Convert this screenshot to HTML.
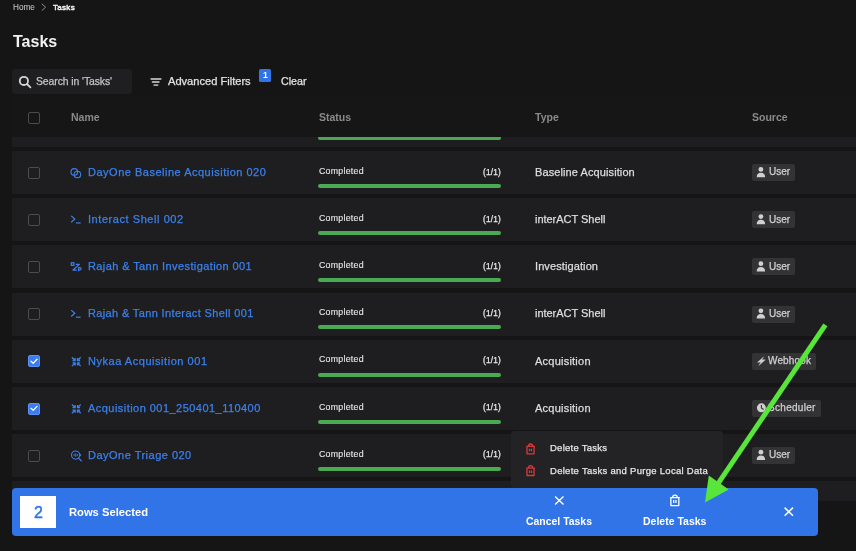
<!DOCTYPE html>
<html><head><meta charset="utf-8"><style>
html,body{margin:0;padding:0;}
body{width:856px;height:551px;overflow:hidden;background:#151515;position:relative;font-family:"Liberation Sans", sans-serif;}
.t{position:absolute;line-height:1;white-space:nowrap;will-change:transform;}
.m{-webkit-text-stroke:0.25px currentColor;}
.s{-webkit-text-stroke:0.12px currentColor;}
.sb{-webkit-text-stroke:0.45px currentColor;}
.b{position:absolute;box-sizing:border-box;}
svg{position:absolute;overflow:visible;}
</style></head><body>
<div class="t s" style="left:12.80px;top:3.66px;font-size:8.2px;color:#bcbcbc;font-weight:400;letter-spacing:0.02px;">Home</div>
<svg style="left:0;top:0" width="856" height="551"><path d="M41.8 3.8 L45.6 7.2 L41.8 10.6" fill="none" stroke="#9a9a9a" stroke-width="0.9"/></svg>
<div class="t sb" style="left:53.10px;top:3.53px;font-size:8.0px;color:#f2f2f2;font-weight:400;letter-spacing:0.3px;">Tasks</div>
<div class="t " style="left:13.00px;top:34.06px;font-size:16px;color:#f2f2f2;font-weight:700;letter-spacing:0px;">Tasks</div>
<div class="b" style="left:12px;top:69px;width:120px;height:25px;background:#1f1f21;border-radius:3px;"></div>
<svg style="left:0;top:0" width="856" height="551"><circle cx="23.9" cy="80.9" r="4.1" fill="none" stroke="#d6d6d6" stroke-width="1.8"/><path d="M27 84 L30.4 87.4" stroke="#d6d6d6" stroke-width="1.8" stroke-linecap="round"/></svg>
<div class="t m" style="left:35.70px;top:77.10px;font-size:10.4px;color:#c4c4c4;font-weight:400;letter-spacing:-0.08px;">Search in 'Tasks'</div>
<svg style="left:0;top:0" width="856" height="551"><path d="M151.3 79 H160.7 M152.6 82 H158.8 M154.2 85.1 H157.6" stroke="#a8a8a8" stroke-width="1.8" stroke-linecap="round"/></svg>
<div class="t m" style="left:168.40px;top:75.80px;font-size:11.1px;color:#e2e2e2;font-weight:400;letter-spacing:0px;">Advanced Filters</div>
<div class="b" style="left:259px;top:69px;width:12px;height:12.5px;background:#3074e7;border-radius:1.5px;"></div>
<div class="t " style="left:262.60px;top:71.40px;font-size:8.5px;color:#ffffff;font-weight:700;letter-spacing:0px;">1</div>
<div class="t m" style="left:280.90px;top:76.14px;font-size:10.7px;color:#e2e2e2;font-weight:400;letter-spacing:0px;">Clear</div>
<div class="b" style="left:0;top:0;width:856px;height:501px;overflow:hidden;">
<div class="b" style="left:12px;top:104px;width:850px;height:43px;background:#1e1e20;border-radius:1px;"></div>
<div class="b" style="left:318px;top:136px;width:183px;height:4px;background:#4aaa52;border-radius:2px;"></div>
<div class="b" style="left:12px;top:151.2px;width:850px;height:43px;background:#1e1e20;border-radius:1px;"></div>
<div class="b" style="left:28px;top:166.89999999999998px;width:12px;height:12px;background:transparent;border-radius:2px;border:1px solid #4c4c4e;"></div>
<svg style="left:0;top:0" width="856" height="551"><circle cx="74.3" cy="171.89999999999998" r="3.3" fill="none" stroke="#3b80ec" stroke-width="1.1"/><circle cx="77.4" cy="174.5" r="3.3" fill="none" stroke="#3b80ec" stroke-width="1.1"/></svg>
<div class="t m" style="left:88.40px;top:166.99px;font-size:11px;color:#3b80ec;font-weight:400;letter-spacing:0.505px;">DayOne Baseline Acquisition 020</div>
<div class="t s" style="left:318.80px;top:166.95px;font-size:8.8px;color:#e8e8e8;font-weight:400;letter-spacing:0.25px;">Completed</div>
<div class="t m" style="right:355.40px;top:167.67px;font-size:8.3px;color:#e8e8e8;font-weight:400;letter-spacing:0.2px;">(1/1)</div>
<div class="b" style="left:318px;top:184.0px;width:183px;height:4px;background:#4aaa52;border-radius:2px;"></div>
<div class="t m" style="left:535.30px;top:167.09px;font-size:11px;color:#dedede;font-weight:400;letter-spacing:0.1px;">Baseline Acquisition</div>
<div class="b" style="left:752px;top:164.2px;width:43px;height:17px;background:#333335;border-radius:2px;"></div>
<svg style="left:0;top:0" width="856" height="551"><circle cx="760.9" cy="169.39999999999998" r="2.4" fill="#d0d0d0"/><path d="M756.7 177.2 Q756.7 172.7 760.9 172.7 Q765.1 172.7 765.1 177.2 Z" fill="#d0d0d0"/></svg>
<div class="t m" style="left:768.60px;top:167.43px;font-size:10px;color:#d0d0d0;font-weight:400;letter-spacing:0px;">User</div>
<div class="b" style="left:12px;top:198.33px;width:850px;height:43px;background:#1e1e20;border-radius:1px;"></div>
<div class="b" style="left:28px;top:214.03px;width:12px;height:12px;background:transparent;border-radius:2px;border:1px solid #4c4c4e;"></div>
<svg style="left:0;top:0" width="856" height="551"><path d="M71.2 215.83 L74.8 219.03 L71.2 222.23000000000002" fill="none" stroke="#3b80ec" stroke-width="1.2"/><path d="M76 222.93 H80.6" stroke="#3b80ec" stroke-width="1.2"/></svg>
<div class="t m" style="left:88.40px;top:214.12px;font-size:11px;color:#3b80ec;font-weight:400;letter-spacing:0.56px;">Interact Shell 002</div>
<div class="t s" style="left:318.80px;top:214.08px;font-size:8.8px;color:#e8e8e8;font-weight:400;letter-spacing:0.25px;">Completed</div>
<div class="t m" style="right:355.40px;top:214.80px;font-size:8.3px;color:#e8e8e8;font-weight:400;letter-spacing:0.2px;">(1/1)</div>
<div class="b" style="left:318px;top:231.13px;width:183px;height:4px;background:#4aaa52;border-radius:2px;"></div>
<div class="t m" style="left:535.30px;top:214.22px;font-size:11px;color:#dedede;font-weight:400;letter-spacing:-0.03px;">interACT Shell</div>
<div class="b" style="left:752px;top:211.33px;width:43px;height:17px;background:#333335;border-radius:2px;"></div>
<svg style="left:0;top:0" width="856" height="551"><circle cx="760.9" cy="216.53" r="2.4" fill="#d0d0d0"/><path d="M756.7 224.33 Q756.7 219.83 760.9 219.83 Q765.1 219.83 765.1 224.33 Z" fill="#d0d0d0"/></svg>
<div class="t m" style="left:768.60px;top:214.56px;font-size:10px;color:#d0d0d0;font-weight:400;letter-spacing:0px;">User</div>
<div class="b" style="left:12px;top:245.46px;width:850px;height:43px;background:#1e1e20;border-radius:1px;"></div>
<div class="b" style="left:28px;top:261.16px;width:12px;height:12px;background:transparent;border-radius:2px;border:1px solid #4c4c4e;"></div>
<svg style="left:0;top:0" width="856" height="551"><rect x="71.3" y="262.76" width="2.6" height="2.6" fill="none" stroke="#3b80ec" stroke-width="1.2"/><path d="M75.8 264.36 H79.4 L73 270.06 H76.8" fill="none" stroke="#3b80ec" stroke-width="1.2" stroke-linejoin="round"/><path d="M78.6 271.26 V267.66 H80 A1.1 1.1 0 0 1 80 269.86 H78.6" fill="none" stroke="#3b80ec" stroke-width="1.1"/></svg>
<div class="t m" style="left:88.40px;top:261.25px;font-size:11px;color:#3b80ec;font-weight:400;letter-spacing:0.4px;">Rajah &amp; Tann Investigation 001</div>
<div class="t s" style="left:318.80px;top:261.21px;font-size:8.8px;color:#e8e8e8;font-weight:400;letter-spacing:0.25px;">Completed</div>
<div class="t m" style="right:355.40px;top:261.93px;font-size:8.3px;color:#e8e8e8;font-weight:400;letter-spacing:0.2px;">(1/1)</div>
<div class="b" style="left:318px;top:278.26px;width:183px;height:4px;background:#4aaa52;border-radius:2px;"></div>
<div class="t m" style="left:535.30px;top:261.35px;font-size:11px;color:#dedede;font-weight:400;letter-spacing:0.1px;">Investigation</div>
<div class="b" style="left:752px;top:258.46000000000004px;width:43px;height:17px;background:#333335;border-radius:2px;"></div>
<svg style="left:0;top:0" width="856" height="551"><circle cx="760.9" cy="263.66" r="2.4" fill="#d0d0d0"/><path d="M756.7 271.46000000000004 Q756.7 266.96000000000004 760.9 266.96000000000004 Q765.1 266.96000000000004 765.1 271.46000000000004 Z" fill="#d0d0d0"/></svg>
<div class="t m" style="left:768.60px;top:261.70px;font-size:10px;color:#d0d0d0;font-weight:400;letter-spacing:0px;">User</div>
<div class="b" style="left:12px;top:292.59px;width:850px;height:43px;background:#1e1e20;border-radius:1px;"></div>
<div class="b" style="left:28px;top:308.28999999999996px;width:12px;height:12px;background:transparent;border-radius:2px;border:1px solid #4c4c4e;"></div>
<svg style="left:0;top:0" width="856" height="551"><path d="M71.2 310.09 L74.8 313.28999999999996 L71.2 316.48999999999995" fill="none" stroke="#3b80ec" stroke-width="1.2"/><path d="M76 317.19 H80.6" stroke="#3b80ec" stroke-width="1.2"/></svg>
<div class="t m" style="left:88.40px;top:308.38px;font-size:11px;color:#3b80ec;font-weight:400;letter-spacing:0.36px;">Rajah &amp; Tann Interact Shell 001</div>
<div class="t s" style="left:318.80px;top:308.34px;font-size:8.8px;color:#e8e8e8;font-weight:400;letter-spacing:0.25px;">Completed</div>
<div class="t m" style="right:355.40px;top:309.06px;font-size:8.3px;color:#e8e8e8;font-weight:400;letter-spacing:0.2px;">(1/1)</div>
<div class="b" style="left:318px;top:325.39px;width:183px;height:4px;background:#4aaa52;border-radius:2px;"></div>
<div class="t m" style="left:535.30px;top:308.48px;font-size:11px;color:#dedede;font-weight:400;letter-spacing:-0.03px;">interACT Shell</div>
<div class="b" style="left:752px;top:305.59px;width:43px;height:17px;background:#333335;border-radius:2px;"></div>
<svg style="left:0;top:0" width="856" height="551"><circle cx="760.9" cy="310.78999999999996" r="2.4" fill="#d0d0d0"/><path d="M756.7 318.59 Q756.7 314.09 760.9 314.09 Q765.1 314.09 765.1 318.59 Z" fill="#d0d0d0"/></svg>
<div class="t m" style="left:768.60px;top:308.82px;font-size:10px;color:#d0d0d0;font-weight:400;letter-spacing:0px;">User</div>
<div class="b" style="left:12px;top:339.72px;width:850px;height:43px;background:#1e1e20;border-radius:1px;"></div>
<div class="b" style="left:28px;top:355.42px;width:12px;height:12px;background:#3b7cf0;border-radius:2px;border:1px solid #5a93f5;"></div>
<svg style="left:0;top:0" width="856" height="551"><path d="M31 361.22 L33.2 363.22 L37 359.22" fill="none" stroke="#fff" stroke-width="1.3" stroke-linecap="round" stroke-linejoin="round"/></svg>
<svg style="left:0;top:0" width="856" height="551"><path d="M71.90 357.32 L75.10 360.52 M72.50 360.52 H75.10 V357.92 M71.90 366.12 L75.10 362.92 M72.50 362.92 H75.10 V365.52 M80.70 357.32 L77.50 360.52 M80.10 360.52 H77.50 V357.92 M80.70 366.12 L77.50 362.92 M80.10 362.92 H77.50 V365.52 " fill="none" stroke="#3b80ec" stroke-width="1.3"/></svg>
<div class="t m" style="left:88.40px;top:355.51px;font-size:11px;color:#3b80ec;font-weight:400;letter-spacing:0.54px;">Nykaa Acquisition 001</div>
<div class="t s" style="left:318.80px;top:355.47px;font-size:8.8px;color:#e8e8e8;font-weight:400;letter-spacing:0.25px;">Completed</div>
<div class="t m" style="right:355.40px;top:356.19px;font-size:8.3px;color:#e8e8e8;font-weight:400;letter-spacing:0.2px;">(1/1)</div>
<div class="b" style="left:318px;top:372.52000000000004px;width:183px;height:4px;background:#4aaa52;border-radius:2px;"></div>
<div class="t m" style="left:535.30px;top:355.61px;font-size:11px;color:#dedede;font-weight:400;letter-spacing:0.23px;">Acquisition</div>
<div class="b" style="left:752px;top:352.92px;width:64px;height:17px;background:#333335;border-radius:2px;"></div>
<svg style="left:0;top:0" width="856" height="551"><path d="M763.6 356.92 L757.5 362.32000000000005 H760.9 L758.9 365.42 L765.3 359.82000000000005 H761.9 Z" fill="#d0d0d0" stroke="#d0d0d0" stroke-width="0.4" stroke-linejoin="round"/></svg>
<div class="t m" style="left:768.40px;top:355.66px;font-size:10px;color:#d0d0d0;font-weight:400;letter-spacing:0.15px;">Webhook</div>
<div class="b" style="left:12px;top:386.85px;width:850px;height:43px;background:#1e1e20;border-radius:1px;"></div>
<div class="b" style="left:28px;top:402.55px;width:12px;height:12px;background:#3b7cf0;border-radius:2px;border:1px solid #5a93f5;"></div>
<svg style="left:0;top:0" width="856" height="551"><path d="M31 408.35 L33.2 410.35 L37 406.35" fill="none" stroke="#fff" stroke-width="1.3" stroke-linecap="round" stroke-linejoin="round"/></svg>
<svg style="left:0;top:0" width="856" height="551"><path d="M71.90 404.45 L75.10 407.65 M72.50 407.65 H75.10 V405.05 M71.90 413.25 L75.10 410.05 M72.50 410.05 H75.10 V412.65 M80.70 404.45 L77.50 407.65 M80.10 407.65 H77.50 V405.05 M80.70 413.25 L77.50 410.05 M80.10 410.05 H77.50 V412.65 " fill="none" stroke="#3b80ec" stroke-width="1.3"/></svg>
<div class="t m" style="left:88.40px;top:402.64px;font-size:11px;color:#3b80ec;font-weight:400;letter-spacing:0.46px;">Acquisition 001_250401_110400</div>
<div class="t s" style="left:318.80px;top:402.60px;font-size:8.8px;color:#e8e8e8;font-weight:400;letter-spacing:0.25px;">Completed</div>
<div class="t m" style="right:355.40px;top:403.32px;font-size:8.3px;color:#e8e8e8;font-weight:400;letter-spacing:0.2px;">(1/1)</div>
<div class="b" style="left:318px;top:419.65000000000003px;width:183px;height:4px;background:#4aaa52;border-radius:2px;"></div>
<div class="t m" style="left:535.30px;top:402.74px;font-size:11px;color:#dedede;font-weight:400;letter-spacing:0.23px;">Acquisition</div>
<div class="b" style="left:752px;top:400.05px;width:69px;height:17px;background:#333335;border-radius:2px;"></div>
<svg style="left:0;top:0" width="856" height="551"><circle cx="761.4" cy="407.85" r="4.5" fill="#d0d0d0"/><path d="M761.4 405.05 V407.95000000000005 L763.6 409.55" fill="none" stroke="#333335" stroke-width="1.1"/></svg>
<div class="t m" style="left:768.40px;top:402.79px;font-size:10px;color:#d0d0d0;font-weight:400;letter-spacing:0.3px;">Scheduler</div>
<div class="b" style="left:12px;top:433.98px;width:850px;height:43px;background:#1e1e20;border-radius:1px;"></div>
<div class="b" style="left:28px;top:449.68px;width:12px;height:12px;background:transparent;border-radius:2px;border:1px solid #4c4c4e;"></div>
<svg style="left:0;top:0" width="856" height="551"><circle cx="75.6" cy="455.08000000000004" r="4.1" fill="none" stroke="#3b80ec" stroke-width="1.1"/><path d="M78.6 458.08000000000004 L81.3 460.78000000000003" stroke="#3b80ec" stroke-width="1.2" stroke-linecap="round"/><path d="M74.1 453.98 V456.18 M75.7 453.38 V456.78000000000003 M77.3 453.98 V456.18 M80.6 453.98 V456.18" stroke="#3b80ec" stroke-width="0.9"/></svg>
<div class="t m" style="left:88.40px;top:449.77px;font-size:11px;color:#3b80ec;font-weight:400;letter-spacing:0.49px;">DayOne Triage 020</div>
<div class="t s" style="left:318.80px;top:449.73px;font-size:8.8px;color:#e8e8e8;font-weight:400;letter-spacing:0.25px;">Completed</div>
<div class="t m" style="right:355.40px;top:450.45px;font-size:8.3px;color:#e8e8e8;font-weight:400;letter-spacing:0.2px;">(1/1)</div>
<div class="b" style="left:318px;top:466.78000000000003px;width:183px;height:4px;background:#4aaa52;border-radius:2px;"></div>
<div class="t m" style="left:535.30px;top:449.87px;font-size:11px;color:#dedede;font-weight:400;letter-spacing:0.1px;">Investigation</div>
<div class="b" style="left:752px;top:446.98px;width:43px;height:17px;background:#333335;border-radius:2px;"></div>
<svg style="left:0;top:0" width="856" height="551"><circle cx="760.9" cy="452.18" r="2.4" fill="#d0d0d0"/><path d="M756.7 459.98 Q756.7 455.48 760.9 455.48 Q765.1 455.48 765.1 459.98 Z" fill="#d0d0d0"/></svg>
<div class="t m" style="left:768.60px;top:450.22px;font-size:10px;color:#d0d0d0;font-weight:400;letter-spacing:0px;">User</div>
<div class="b" style="left:12px;top:481.11px;width:850px;height:43px;background:#1e1e20;border-radius:1px;"></div>
<div class="b" style="left:28px;top:496.81px;width:12px;height:12px;background:transparent;border-radius:2px;border:1px solid #4c4c4e;"></div>
</div>
<div class="b" style="left:12px;top:96px;width:844px;height:41px;background:#161616;border-radius:0px;"></div>
<div class="b" style="left:28px;top:112px;width:12px;height:12px;background:transparent;border-radius:2px;border:1px solid #4c4c4e;"></div>
<div class="t " style="left:70.70px;top:112.41px;font-size:10.5px;color:#8a8a8a;font-weight:700;letter-spacing:0.0px;">Name</div>
<div class="t " style="left:318.60px;top:112.41px;font-size:10.5px;color:#8a8a8a;font-weight:700;letter-spacing:0.0px;">Status</div>
<div class="t " style="left:535.10px;top:112.41px;font-size:10.5px;color:#8a8a8a;font-weight:700;letter-spacing:0.0px;">Type</div>
<div class="t " style="left:752.00px;top:112.41px;font-size:10.5px;color:#8a8a8a;font-weight:700;letter-spacing:0.0px;">Source</div>
<div class="b" style="left:511px;top:431px;width:212px;height:57px;background:#232325;border-radius:3px;"></div>
<svg style="left:0;top:0" width="856" height="551"><path d="M526.30 446.46 H534.90 M528.54 446.46 A2.06 2.45 0 0 1 532.66 446.46 M526.99 446.46 V453.80 H534.04 V446.46 M529.48 448.70 V451.35 M531.46 448.70 V451.35" fill="none" stroke="#d83a3c" stroke-width="1.3" stroke-linejoin="round"/></svg>
<div class="t m" style="left:549.60px;top:442.86px;font-size:9.5px;color:#e6e6e6;font-weight:400;letter-spacing:0.25px;">Delete Tasks</div>
<svg style="left:0;top:0" width="856" height="551"><path d="M526.30 468.16 H534.90 M528.54 468.16 A2.06 2.45 0 0 1 532.66 468.16 M526.99 468.16 V475.50 H534.04 V468.16 M529.48 470.40 V473.05 M531.46 470.40 V473.05" fill="none" stroke="#d83a3c" stroke-width="1.3" stroke-linejoin="round"/></svg>
<div class="t m" style="left:549.60px;top:465.86px;font-size:9.5px;color:#e6e6e6;font-weight:400;letter-spacing:0.28px;">Delete Tasks and Purge Local Data</div>
<div class="b" style="left:12px;top:488px;width:806px;height:48px;background:#3074e7;border-radius:4px;"></div>
<div class="b" style="left:20px;top:496px;width:36px;height:32px;background:#ffffff;border-radius:0px;"></div>
<div class="t sb" style="left:34.00px;top:505.26px;font-size:16px;color:#3074e7;font-weight:400;letter-spacing:0px;">2</div>
<div class="t " style="left:69.40px;top:506.72px;font-size:11.2px;color:#ffffff;font-weight:700;letter-spacing:0px;">Rows Selected</div>
<svg style="left:0;top:0" width="856" height="551"><path d="M555.1 496.5 L563.5 504.6 M563.5 496.5 L555.1 504.6" stroke="#fff" stroke-width="1.4"/></svg>
<div class="t " style="left:526.10px;top:516.75px;font-size:10.45px;color:#ffffff;font-weight:700;letter-spacing:0px;">Cancel Tasks</div>
<svg style="left:0;top:0" width="856" height="551"><path d="M670.10 497.68 H679.80 M672.62 497.68 A2.33 2.64 0 0 1 677.28 497.68 M670.88 497.68 V505.60 H678.83 V497.68 M673.69 500.10 V502.96 M675.92 500.10 V502.96" fill="none" stroke="#ffffff" stroke-width="1.3" stroke-linejoin="round"/></svg>
<div class="t " style="left:642.90px;top:516.31px;font-size:10.5px;color:#ffffff;font-weight:700;letter-spacing:0px;">Delete Tasks</div>
<svg style="left:0;top:0" width="856" height="551"><path d="M784.6 507.6 L793 515.8 M793 507.6 L784.6 515.8" stroke="#fff" stroke-width="1.5"/></svg>
<svg style="left:0;top:0" width="856" height="551"><path d="M825.4 324.9 L716 486.6" stroke="#58e63a" stroke-width="5"/><path d="M705 502.5 L708.8 475.6 L728.7 489.5 Z" fill="#58e63a"/></svg>
</body></html>
